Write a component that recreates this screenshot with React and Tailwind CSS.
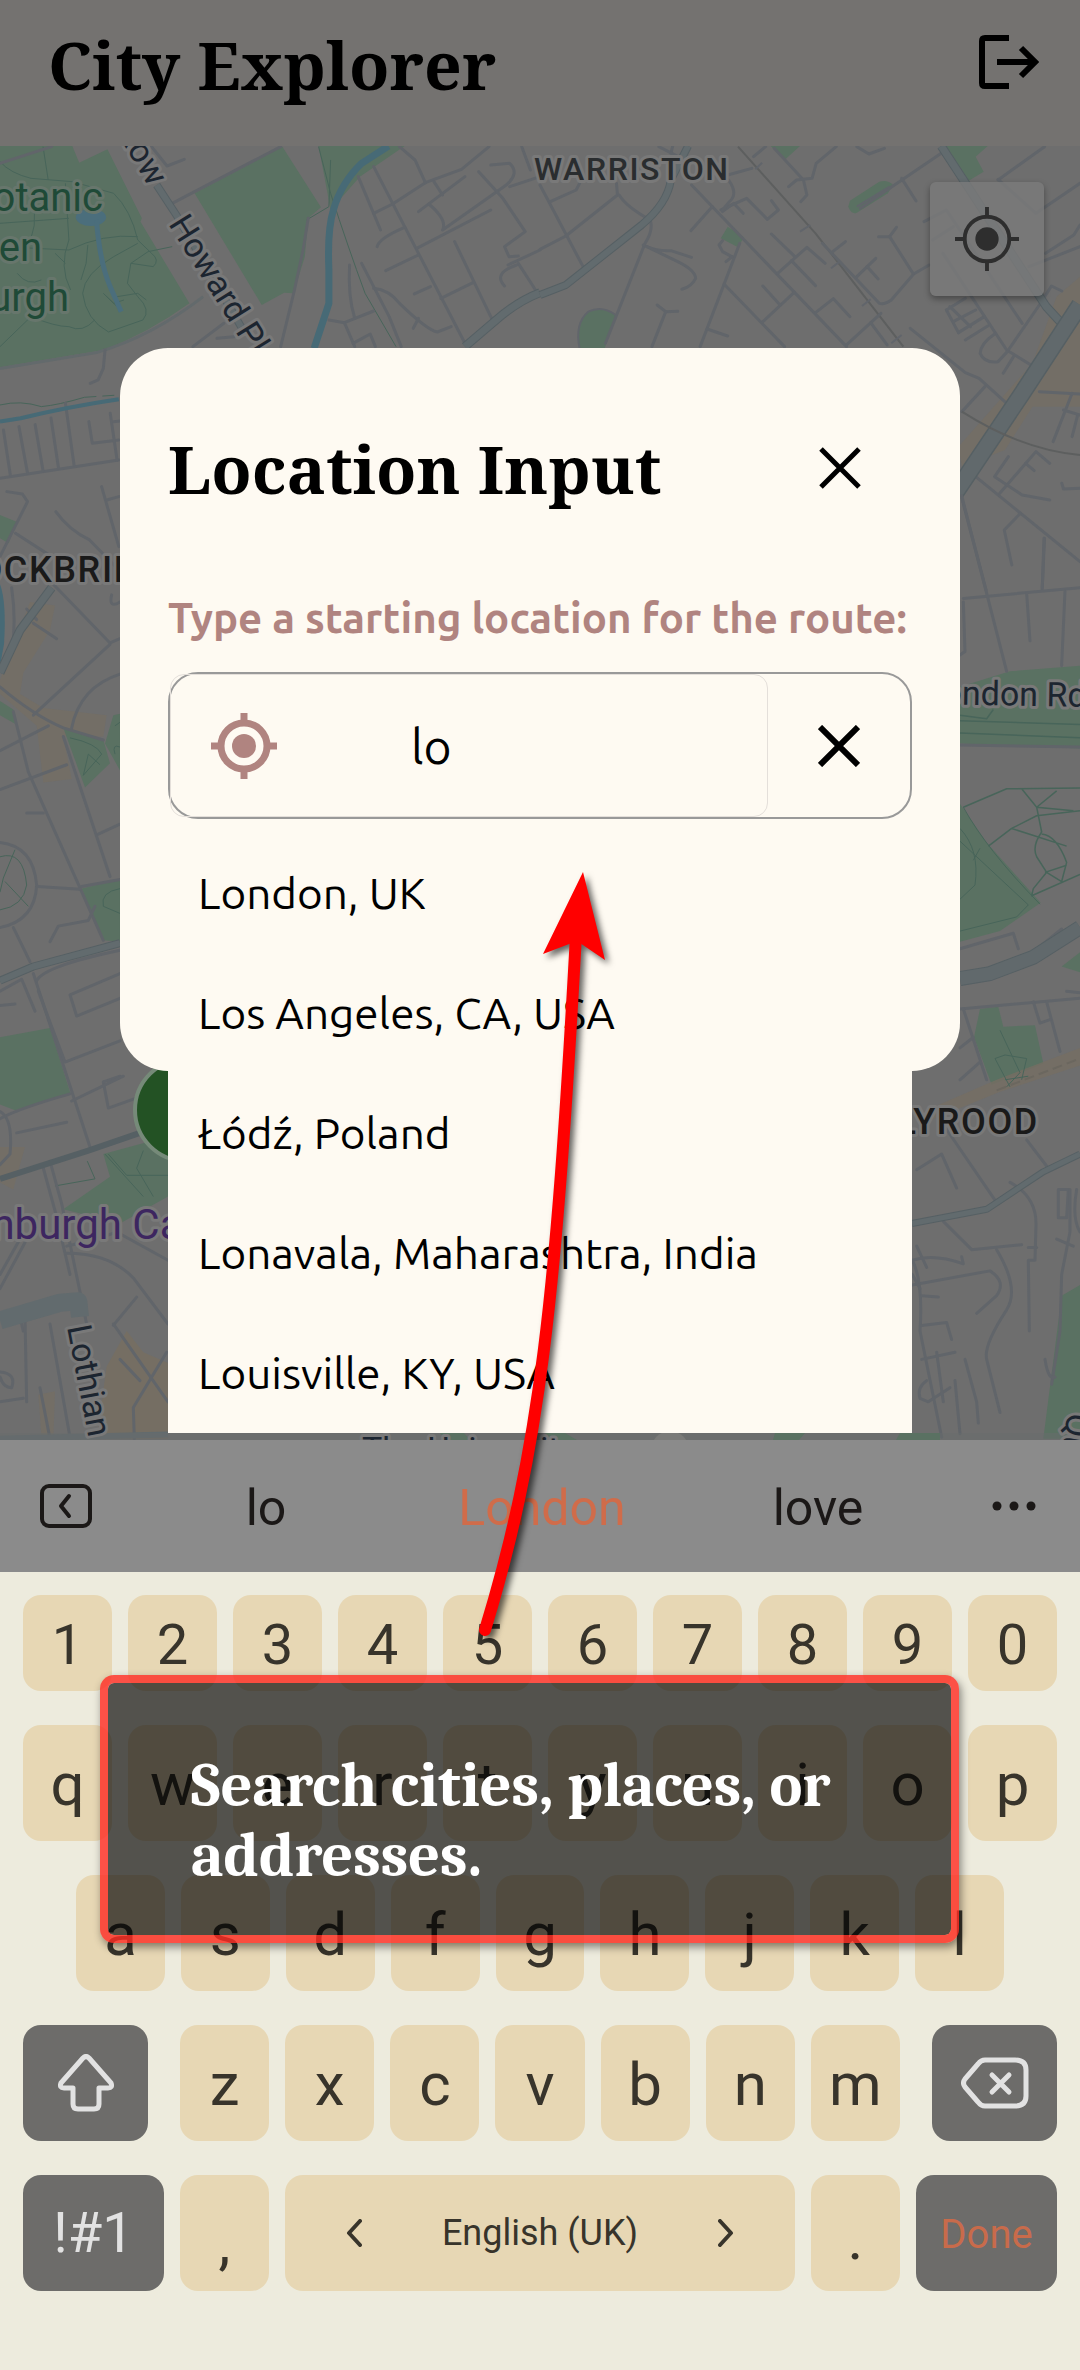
import React from "react";

const NW_ROADS = [
  "M500 220 L815 50", "M0 100 L150 50", "M440 50 L485 108 L535 88", "M895 265 L880 360 L855 480 L815 650", "M560 650 L650 580",
  "M1040 140 L1105 300", "M1085 110 L1350 640", "M1050 400 L1130 560 L1165 650", "M1015 405 Q1010 500 1030 565",
  "M955 570 L1000 578 L1085 543", "M1000 578 L1030 650", "M1025 640 L1075 612 L1090 650", "M1085 475 Q1130 480 1160 520 Q1240 600 1270 606 L1310 590",
  "M1215 565 L1200 595", "M1085 250 L1140 222 L1235 158 L1340 118 L1420 50", "M1160 50 L1205 90 L1235 158", "M1095 350 Q1100 325 1175 292",
  "M1120 422 L1215 375", "M1210 355 L1425 240", "M1203 492 L1250 470", "M1280 505 L1375 457", "M1320 335 L1432 575",
  "M1215 245 L1350 140", "M1245 222 Q1300 270 1285 300 L1470 165 Q1510 130 1480 100 L1425 105", "M1260 155 L1285 195", "M1390 125 L1460 205 L1525 305 L1465 350 L1478 380 L1505 378",
  "M1475 405 L1568 360", "M1505 400 L1555 480", "M1500 405 Q1430 430 1465 468", "M1515 50 L1540 120", "M1480 170 L1568 140",
  "M0 1045 L345 990", "M10 900 L30 1035", "M55 890 L80 1030", "M102 884 L125 1022", "M148 864 L170 1015", "M190 820 L215 1005", "M258 875 L268 940 L345 930", "M320 850 L340 990",
  "M305 660 L300 715 L285 750 L262 760", "M20 1085 L65 1092 L80 1115 L0 1280", "M162 1145 Q200 1200 260 1230 L345 1320", "M295 1070 L345 1250", "M310 1110 L345 1100", "M45 1210 L150 1280", "M330 875 L348 873", "M630 625 L680 620",
];

const NE_ROADS = [
  "M0 165 L125 410", "M30 215 L105 180 L115 160", "M0 358 L75 318 L225 195 L222 160", "M230 195 Q250 230 320 270 Q330 300 305 340 L190 640",
  "M300 345 Q340 365 380 362 L440 382", "M310 350 L400 395 Q450 420 452 445 Q440 470 412 478", "M340 525 L365 545 L400 544", "M365 545 L325 650",
  "M440 165 L890 650", "M500 230 L438 302", "M525 240 L600 205 L660 268 L692 240 L672 212", "M530 245 L562 220 L590 250", "M540 140 Q580 190 550 215 L530 240", "M545 135 L615 115",
  "M580 340 L465 650", "M520 345 L530 365 L557 380 M520 345 L530 332", "M535 463 L710 650", "M485 597 L545 618", "M672 312 L740 380", "M690 430 L775 352 L828 400",
  "M730 392 L800 467", "M645 577 L738 487", "M647 468 L697 525", "M800 548 L852 506 L900 560", "M680 55 L765 150 L775 195 L757 215", "M722 170 L745 150 L790 145 L802 100 L860 50",
  "M820 340 L985 520 Q1000 525 1020 510 L1085 432 L1130 405", "M850 365 L887 335", "M920 440 L975 385", "M950 410 L982 447", "M890 645 L990 550", "M960 578 L1008 645",
  "M983 320 L1015 320 L1035 292", "M1015 320 L1083 430", "M930 235 L1165 70", "M1050 145 L1092 213", "M1330 150 L1465 50", "M1330 148 L1440 250 L1568 160", "M1115 275 L1180 240 L1400 580", "M1140 330 L1200 290",
  "M1420 410 L1568 350", "M1468 370 L1550 315 L1568 285", "M1180 540 L1215 608", "M1190 530 L1250 590 M1180 540 L1235 505 M1200 575 L1265 540 M1215 608 L1290 560 M1235 630 L1300 588",
  "M1170 370 L1355 660 L1430 708", "M1360 660 L1450 525 L1485 468 L1515 483", "M1320 612 Q1280 640 1278 670 Q1290 700 1330 695 L1357 665", "M1375 680 L1345 730",
  "M1075 595 L1235 728 L1275 745 L1355 820", "M1292 770 L1225 845", "M540 395 L558 380", "M385 50 L380 70", "M620 80 L655 50", "M920 50 L955 72 L1000 55",
  "M1265 1040 L1568 1295", "M1395 1150 L1348 1200 L1370 1305", "M1225 1105 L1295 1380", "M1465 1225 L1458 1380", "M1335 1090 L1440 965 L1480 1000", "M1360 980 L1320 1040 L1400 1095 L1480 1110", "M1410 1000 L1435 1022",
  "M1545 790 L1490 935 M1520 840 L1568 855 M1560 860 L1545 920", "M1515 1060 L1520 1077 L1568 1075", "M1450 785 L1568 792", "M345 50 L430 95",
];

const W_ROADS = [
  "M35 350 Q50 400 35 440", "M100 400 L170 422", "M80 380 L110 395", "M160 345 L330 428 L360 422", "M335 360 Q325 380 360 370", "M100 530 L330 430",
  "M0 490 Q100 530 190 548 L310 565", "M215 548 Q240 490 360 472", "M40 525 L85 610 L310 848", "M0 580 L145 545", "M0 635 L200 600", "M190 560 L330 758", "M295 698 L360 684",
  "M245 772 L360 762", "M80 668 L130 668", "M0 710 Q100 715 110 770 Q105 820 0 830", "M112 772 L240 776", "M150 850 L175 828 L265 820 L285 800", "M40 830 L90 878", "M100 895 L270 1140",
  "M110 905 Q130 885 360 862", "M115 920 L195 1020 L360 990", "M210 925 L360 895 M210 925 L230 955 L360 930", "M0 920 L65 903 L105 948", "M0 940 L45 938",
  "M310 1048 L360 1040 M310 1048 L325 1085 L415 1070", "M215 1075 L370 1040", "M0 1090 Q40 1100 30 1150 L0 1165", "M0 1100 Q60 1085 210 1065", "M50 1120 L200 1105",
  "M130 1170 L165 1230 L210 1320", "M150 1160 L185 1220 L260 1390", "M200 1290 Q330 1290 400 1325 L504 1390", "M200 1280 Q300 1270 350 1260 L504 1300", "M410 1352 L340 1392", "M340 1390 L504 1500",
  "M500 1430 L400 1508 L403 1552", "M0 1320 L60 1270", "M0 1340 L75 1275", "M0 1458 Q50 1460 35 1480 Q10 1480 0 1465", "M150 1390 L210 1550", "M120 1480 L150 1552", "M70 1400 L60 1380", "M360 1440 L420 1470", "M0 1500 L70 1495", "M75 1380 L80 1500",
];

const E_ROADS = [
  "M190 365 L540 350", "M185 220 L320 468", "M380 358 L390 425", "M495 355 L485 460", "M432 280 L427 350", "M190 370 L195 440 L180 445", "M180 572 L540 575",
  "M180 860 L340 838 L355 860", "M390 868 L485 832", "M500 920 L540 922", "M180 945 L540 930", "M190 945 L260 1045", "M180 1000 L220 985", "M180 1045 L240 1020", "M440 935 L480 1005", "M400 935 L420 965 L450 960",
  "M50 1172 L125 1150 L170 1198", "M125 1105 L285 1215", "M380 1130 L445 1170", "M50 1280 L80 1310", "M130 1245 L215 1285 L365 1278", "M37 1300 Q100 1290 190 1305 L185 1295", "M37 1335 L270 1315 Q320 1330 290 1350 L230 1375",
  "M37 1300 Q70 1330 60 1400 L125 1550", "M65 1350 L115 1352", "M65 1392 L140 1388 L155 1412", "M37 1320 L60 1340", "M65 1440 L165 1430", "M80 1470 Q50 1480 60 1495 L85 1500 L150 1480", "M110 1430 L130 1500",
  "M290 1285 Q360 1340 320 1370 Q250 1420 260 1440 L300 1515", "M330 1190 Q410 1210 408 1250 L405 1300 L385 1300 L388 1400", "M385 1282 L410 1282", "M475 1200 L505 1200 L500 1240 L475 1240 Z", "M510 1200 L510 1260 L485 1320 L480 1400 L455 1475", "M530 1200 Q515 1240 540 1260", "M435 1440 Q445 1470 465 1465", "M195 1440 L230 1500 L235 1530", "M165 1470 L180 1545", "M470 1270 L520 1280",
];

function Roads({ paths, width = 3 }) {
  return (
    <g fill="none" stroke="#61656a" strokeWidth={width} strokeLinejoin="round" strokeLinecap="round">
      {paths.map((d) => (
        <path key={d} d={d} vectorEffect="non-scaling-stroke" />
      ))}
    </g>
  );
}

function Line({ d, color, width, dash }) {
  return <path d={d} fill="none" stroke={color} strokeWidth={width} strokeDasharray={dash} strokeLinejoin="round" vectorEffect="non-scaling-stroke" />;
}

const GREEN = "#5a7162";
const SAND = "#756e63";
const PATH = "#48655a";
const WATER = "#476a76";
const EDGE = "#566064";
const MAJOR = "#626b6e";

function CityMap() {
  return (
    <svg viewBox="0 146 1080 1294" preserveAspectRatio="xMidYMin slice" className="absolute inset-0 h-full w-full font-['Roboto',sans-serif]" aria-hidden="true">
      <rect x="0" y="146" width="1080" height="1294" fill="#6e6e6e" />

      {/* north-west quarter */}
      <g transform="translate(0 130) scale(0.3444 0.3333)">
        <path d="M0 48 L210 48 L230 98 L312 58 L412 265 L408 275 L550 520 Q430 610 300 660 L0 712 Z" fill={GREEN} />
        <path d="M565 190 L820 50 L932 232 L895 265 L885 380 L852 490 L825 488 L760 525 Z" fill={GREEN} />
        <path d="M925 48 L1175 48 L1045 140 L960 240 Z" fill={GREEN} />
        <path d="M0 1155 L48 1175 L25 1240 L0 1225 Z" fill={GREEN} />
        <Line d="M0 716 L280 668 Q440 620 590 500" color="#636a6c" width="3" />
        <g>
          <Line d="M0 95 Q30 130 90 145 L210 155 L330 190 Q380 240 400 330 L440 370 Q465 390 445 410 L380 400 L370 460 L400 500 Q440 540 415 570 L315 606 Q250 570 240 490 Q245 430 330 380 L400 340" color={PATH} width="1" />
          <Line d="M125 50 L140 150 M190 160 L200 330 Q170 410 205 480 M0 280 L200 265 M100 250 Q105 330 60 350 M0 350 L200 360 Q300 310 400 320 M0 650 L90 560 Q160 590 200 590 Q240 610 275 570 M160 370 L190 400 M255 345 L250 400 L235 450 M380 400 L430 365 L500 350 M50 430 Q80 470 120 450" color={PATH} width="1" />
          <Line d="M300 490 L330 520 L360 510 M310 500 L350 540 M340 500 L400 490 L425 510" color={PATH} width="1" />
          <Line d="M925 50 L960 190 Q1010 350 1060 490 L1150 650" color={PATH} width="1" />
          <Line d="M890 270 L955 230 L960 90" color={PATH} width="1" />
          <Line d="M0 825 Q60 810 120 830 Q170 825 245 802" color={PATH} width="1" />
          <Line d="M245 802 L345 795" color={PATH} width="1" dash="12 6" />
        </g>
        <Roads paths={NW_ROADS} />
        <Line d="M455 165 L515 260 L700 590" color={EDGE} width="8" />
        <Line d="M455 165 L515 260 L700 590" color={MAJOR} width="6" />
        <Line d="M1350 650 L1435 575 Q1500 515 1568 488" color={EDGE} width="9" />
        <Line d="M1350 650 L1435 575 Q1500 515 1568 488" color={MAJOR} width="7" />
        <Line d="M1128 48 L1050 100 Q990 160 968 240 Q950 300 955 420 L955 520 L912 655" color={WATER} width="7" />
        <Line d="M0 875 L60 865 Q200 830 345 808" color={WATER} width="4" />
        <ellipse cx="264" cy="262" rx="44" ry="26" fill="#4b6e7c" />
        <Line d="M280 270 Q290 400 320 470 L352 545" color="#4b6e7c" width="5" />
      </g>

      {/* north-east quarter */}
      <g transform="translate(540 130) scale(0.3444 0.3333)">
        <path d="M1500 500 L1568 440 L1568 830 L1430 830 L1350 960 L1225 1010 L1215 950 L1430 700 Z" fill={SAND} opacity="0.7" />
        <path d="M670 48 L755 48 L710 90 Z M1175 48 L1300 48 L1265 80 L1288 125 L1240 155 Z" fill={GREEN} />
        <path d="M545 290 L592 322 L575 352 L525 325 Z" fill={GREEN} />
        <path d="M895 230 L900 212 L985 155 Q1010 148 1025 165 L1010 190 L920 248 Q905 255 895 230 Z" fill={GREEN} />
        <path d="M115 655 Q100 580 140 545 Q180 525 220 555 L188 655 Z" fill={GREEN} />
        <Line d="M115 655 Q100 580 140 545 Q180 525 220 555" color="#61656b" width="2" />
        <Line d="M920 230 L1015 170" color="#61656b" width="2" />
        <Line d="M575 50 L800 310 L1055 650" color="#5d5f5f" width="2" />
        <Line d="M625 118 L645 98 M755 305 L785 285 M845 415 L870 395 M935 528 L960 508 M1020 640 L1050 615" color="#61656b" width="2" />
        <Roads paths={NE_ROADS} />
        <Line d="M0 495 L75 465 L295 285 Q370 220 380 150 L430 48" color={EDGE} width="8" />
        <Line d="M0 495 L75 465 L295 285 Q370 220 380 150 L430 48" color={MAJOR} width="6" />
        <Line d="M1165 48 L1470 530 L1510 575" color={EDGE} width="9" />
        <Line d="M1165 48 L1470 530 L1510 575" color={MAJOR} width="7" />
        <Line d="M1568 525 L1400 790 L1205 1090" color={EDGE} width="18" />
        <Line d="M1568 525 L1400 790 L1205 1090" color="#61696c" width="15" />
        <Line d="M1225 845 Q1400 960 1568 975" color="#5d5f5f" width="2" />
      </g>

      {/* western edge */}
      <g transform="translate(0 340) scale(0.3333 0.7079)">
        <path d="M0 480 L90 370 L165 375 L150 410 L70 470 L60 500 L130 520 L320 530 L310 560 L190 560 L215 620 L130 625 L110 545 L0 500 Z" fill={SAND} opacity="0.7" />
        <path d="M290 1552 L320 1450 L380 1400 L430 1430 L504 1445 L504 1552 Z" fill={SAND} />
        <path d="M0 1140 L75 1140 L60 1165 L40 1200 L0 1190 Z M115 1490 L165 1485 L160 1552 L125 1552 Z" fill={SAND} opacity="0.7" />
        <path d="M0 345 Q20 370 12 430 L0 460 Z" fill={WATER} />
        <path d="M190 548 L310 565 L330 598 L255 632 Z M315 570 L340 530 L360 528 L360 608 Z M245 775 L360 762 L360 850 L310 848 Z M0 985 L150 972 L212 1065 L45 1088 L0 1080 Z M310 1150 L504 1125 L504 1210 L360 1248 L190 1228 L330 1182 Z M0 510 L40 522 L45 542 L0 530 Z" fill={GREEN} />
        <Line d="M210 562 Q290 570 305 585 L250 615 L265 585 L300 600 M345 545 L360 540 M345 585 Q335 570 360 575 M310 800 Q300 780 360 775 M310 800 L360 810 M315 1150 L430 1210 M325 1150 L380 1180 L504 1180 M430 1145 L410 1170 L460 1210 M165 1195 L285 1185 L262 1160 M0 730 Q70 720 80 770 Q70 800 0 805 M45 720 L10 760 L0 780 M15 765 L85 800" color={PATH} width="1" />
        <Roads paths={W_ROADS} />
        <Line d="M0 470 L60 410 L155 350" color={EDGE} width="9" />
        <Line d="M0 470 L60 410 L155 350" color={MAJOR} width="7" />
        <Line d="M0 905 L100 885 L360 852" color={EDGE} width="8" />
        <Line d="M0 905 L100 885 L360 852" color={MAJOR} width="6" />
        <Line d="M0 1185 L265 1145 L420 1120" color={EDGE} width="6" />
        <Line d="M0 1385 L180 1360 L235 1358 L240 1380" color={MAJOR} width="18" />
        <Line d="M0 1552 L504 1546" color={MAJOR} width="6" />
      </g>

      {/* eastern edge */}
      <g transform="translate(900 340) scale(0.3333 0.7079)">
        <path d="M180 490 L330 468 L540 460 L540 577 L180 570 Z M180 655 L260 710 L422 795 L300 835 L180 850 Z M485 885 L540 865 L540 893 Z M240 945 L295 942 L310 970 L405 968 L430 1022 L275 1052 L222 985 Z M485 1350 L540 1335 L540 1552 L430 1552 Z" fill={GREEN} />
        <path d="M70 1090 L290 1045 L540 1000 L540 1025 L300 1062 L75 1105 Z" fill={SAND} opacity="0.8" />
        <Line d="M180 538 L540 543 M180 555 L540 562 M180 530 L260 535 L280 522 M190 660 L320 634 L540 633 M265 715 L335 690 L410 672 L540 665 M335 690 L500 715 M365 634 L410 660 L520 665 M410 660 L425 695 Q395 715 410 730 L440 752 M410 660 L470 637 M425 698 Q470 700 500 738 L485 765 L440 752 L400 775 L395 785 L540 755 M435 752 L500 742" color={PATH} width="1.5" />
        <Line d="M190 660 Q260 720 420 797 M180 690 Q240 720 225 770 L180 790 M180 708 L385 798 L350 815 L180 835 M220 735 L240 718 M285 1015 L315 1010 L380 1015 L365 1045 M300 975 L360 1035 L320 1055 M285 1015 L330 1055 M315 1045 L385 1040" color={PATH} width="1" />
        <Roads paths={E_ROADS} />
        <Line d="M180 902 L270 895 L400 872 L540 830" color={EDGE} width="15" />
        <Line d="M180 902 L270 895 L400 872 L540 830" color="#61696c" width="13" />
        <Line d="M36 1248 L260 1228 L430 1175 L540 1150" color={EDGE} width="7" />
        <Line d="M36 1248 L260 1228 L430 1175 L540 1150" color={MAJOR} width="5" />
        <Line d="M290 1060 L540 1015" color="#6b675f" width="2" dash="10 5" />
      </g>

      <path d="M0 1433 H1080 V1440 H0 Z" fill="#686b6c" opacity="0.5" />
      <path d="M440 1433 h24 l6 7 h-24 Z M545 1433 h20 l12 7 h-26 Z M775 1433 h30 l-6 7 h-26 Z M900 1433 h40 v7 h-44 Z" fill={GREEN} />
      <circle cx="670" cy="1450" r="19" fill="#7a7a78" />

      <circle cx="186" cy="1110" r="51" fill="#235224" stroke="#768a79" strokeWidth="4" />

      <g stroke="#797979" strokeWidth="6" strokeLinejoin="round" paintOrder="stroke">
        <g fill="#1f4a37" stroke="#67766c" fontSize="40" textAnchor="end">
          <text x="103" y="211">Botanic</text>
          <text x="42" y="261">Garden</text>
          <text x="69" y="311">Edinburgh</text>
        </g>
        <g fill="#1c2530" fontSize="34">
          <text transform="translate(149 188) rotate(60)" textAnchor="end">Row</text>
          <text transform="translate(168 224) rotate(58)">Howard Pl</text>
          <text transform="translate(924 704) rotate(1)">London Rd</text>
          <text transform="translate(67 1327) rotate(79)">Lothian Rd</text>
          <text transform="translate(1068 1412) rotate(100)">Queens Dr</text>
          <text x="362" y="1461">The University</text>
        </g>
        <g fill="#2a2d2f" fontWeight="500" className="tracking-widest">
          <text x="534" y="180" fontSize="32">WARRISTON</text>
          <g fontSize="36" fill="#1a1a1a">
            <text x="-69" y="582">STOCKBRIDGE</text>
            <text x="843" y="1134">HOLYROOD</text>
          </g>
        </g>
        <text x="-66" y="1239" fontSize="42" fill="#3d2660">Edinburgh Castle</text>
      </g>
    </svg>
  );
}

function Crosshair({ className, ring }) {
  return (
    <svg viewBox="0 0 66 66" className={className} fill="none" stroke="currentColor" strokeWidth={ring} aria-hidden="true">
      <circle cx="33" cy="33" r="23" />
      <circle cx="33" cy="33" r="12" fill="currentColor" stroke="none" />
      <path d="M33 0 V10 M33 56 V66 M0 33 H10 M56 33 H66" />
    </svg>
  );
}

function Cross({ stroke }) {
  return (
    <svg viewBox="0 0 42 42" className="size-[42px]" fill="none" stroke="currentColor" strokeWidth={stroke} aria-hidden="true">
      <path d="M2 2 L40 40 M40 2 L2 40" />
    </svg>
  );
}

const PLACES = ["London, UK", "Los Angeles, CA, USA", "Łódź, Poland", "Lonavala, Maharashtra, India", "Louisville, KY, USA"];

function LocationDialog() {
  return (
    <div role="dialog" aria-labelledby="dialog-title" className="relative h-[723px] rounded-[48px] bg-[#fefaf2] px-12 pt-[72px] text-black">
      <div className="flex h-24 items-center justify-between pr-[51px]">
        <h2 id="dialog-title" className="font-['Noto_Serif','DejaVu_Serif',serif] text-[66px] font-bold whitespace-nowrap">
          Location Input
        </h2>
        <button type="button" aria-label="Close">
          <Cross stroke="5" />
        </button>
      </div>
      <label htmlFor="place" className="mt-[72px] block h-[60px] font-['Ubuntu','Noto_Sans',sans-serif] text-[42px] leading-[60px] font-bold whitespace-nowrap text-[#b08480]">
        Type a starting location for the route:
      </label>
      <div className="mt-6 flex h-[147px] items-center rounded-[30px] border-2 border-[#999999]">
        <div className="flex h-full flex-1 items-center rounded-[14px] border border-[#e4dfda] pl-10">
          <button type="button" aria-label="Use my location" className="text-[#b08480]">
            <Crosshair className="size-[66px]" ring="7" />
          </button>
          <input id="place" defaultValue="lo" className="ml-[134px] w-full min-w-0 bg-transparent font-['Ubuntu','Noto_Sans',sans-serif] text-[48px] outline-none" />
        </div>
        <button type="button" aria-label="Clear" className="flex w-[142px] justify-center">
          <Cross stroke="6" />
        </button>
      </div>
      <ul className="absolute inset-x-12 top-[485px] bg-[#fefaf2]">
        {PLACES.map((place) => (
          <li key={place}>
            <button type="button" className="h-[120px] w-full px-[30px] text-left font-['Ubuntu','Noto_Sans',sans-serif] text-[44px] whitespace-nowrap">
              {place}
            </button>
          </li>
        ))}
      </ul>
    </div>
  );
}

function Key({ children, className = "h-[116px] flex-1 pt-1 text-[60px]", label }) {
  return (
    <button type="button" aria-label={label} className={`flex min-w-0 items-center justify-center rounded-[18px] bg-[#e7d7b4] text-[#38342b] ${className}`}>
      {children}
    </button>
  );
}

function SuggestionBar() {
  return (
    <div className="flex h-[132px] items-center bg-[#8b8b8b] px-10 text-[50px] text-[#1b1817]">
      <button type="button" aria-label="Back">
        <svg viewBox="0 0 52 44" className="h-11 w-[52px]" fill="none" stroke="currentColor" strokeWidth="4" strokeLinecap="round" strokeLinejoin="round">
          <rect x="2" y="2" width="48" height="40" rx="7" />
          <path d="M29 12 L21 22 L29 32" />
        </svg>
      </button>
      <div className="flex flex-1 px-9 pt-1">
        <button type="button" className="flex-1">lo</button>
        <button type="button" className="flex-1 text-[#d06c4a]">London</button>
        <button type="button" className="flex-1">love</button>
      </div>
      <button type="button" aria-label="More" className="mr-1">
        <svg viewBox="0 0 44 10" className="h-[10px] w-11" fill="currentColor">
          <circle cx="5" cy="5" r="4.5" />
          <circle cx="22" cy="5" r="4.5" />
          <circle cx="39" cy="5" r="4.5" />
        </svg>
      </button>
    </div>
  );
}

function Keyboard() {
  return (
    <div className="flex flex-col gap-[34px] bg-[#edebdd] px-[23px] pt-[23px] pb-[79px]">
      <div className="flex gap-4">
        {[..."1234567890"].map((k) => (
          <Key key={k} className="h-24 flex-1 pt-1 text-[56px]">{k}</Key>
        ))}
      </div>
      <div className="flex gap-4">
        {[..."qwertyuiop"].map((k) => (
          <Key key={k}>{k}</Key>
        ))}
      </div>
      <div className="flex gap-4 px-[53px]">
        {[..."asdfghjkl"].map((k) => (
          <Key key={k}>{k}</Key>
        ))}
      </div>
      <div className="flex gap-8">
        <button type="button" aria-label="Shift" className="flex h-[116px] w-[125px] items-center justify-center rounded-[18px] bg-[#6d6c6a] text-[#e2e2e2]">
          <svg viewBox="0 0 56 58" className="h-[58px] w-14" fill="none" stroke="currentColor" strokeWidth="5" strokeLinejoin="round">
            <path d="M25 4 Q28 1 31 4 L53 29 Q55 34 50 34 H41 V50 Q41 55 36 55 H20 Q15 55 15 50 V34 H6 Q1 34 3 29 Z" />
          </svg>
        </button>
        <div className="flex flex-1 gap-4">
          {[..."zxcvbnm"].map((k) => (
            <Key key={k}>{k}</Key>
          ))}
        </div>
        <button type="button" aria-label="Backspace" className="flex h-[116px] w-[125px] items-center justify-center rounded-[18px] bg-[#6d6c6a] text-[#e2e2e2]">
          <svg viewBox="0 0 68 52" className="h-[52px] w-[68px]" fill="none" stroke="currentColor" strokeWidth="5" strokeLinejoin="round" strokeLinecap="round">
            <path d="M24 3 H54 Q65 3 65 13 V39 Q65 49 54 49 H24 Q20 49 17 45 L4 30 Q1 26 4 22 L17 7 Q20 3 24 3 Z" />
            <path d="M31 18 L48 35 M48 18 L31 35" />
          </svg>
        </button>
      </div>
      <div className="flex gap-4">
        <button type="button" className="h-[116px] w-[141px] rounded-[18px] bg-[#6d6c6a] text-[56px] text-[#e2e2e2]">!#1</button>
        <Key className="h-[116px] w-[89px] pt-5 text-[60px]">,</Key>
        <Key className="h-[116px] flex-1 gap-20 text-[36px]">
          <svg viewBox="0 0 16 28" className="h-7 w-4" fill="none" stroke="currentColor" strokeWidth="4" strokeLinecap="round" strokeLinejoin="round">
            <path d="M14 2 L3 14 L14 26" />
          </svg>
          English (UK)
          <svg viewBox="0 0 16 28" className="h-7 w-4" fill="none" stroke="currentColor" strokeWidth="4" strokeLinecap="round" strokeLinejoin="round">
            <path d="M2 2 L13 14 L2 26" />
          </svg>
        </Key>
        <Key className="h-[116px] w-[89px] pt-3 text-[60px]">.</Key>
        <button type="button" className="h-[116px] w-[141px] rounded-[18px] bg-[#6d6c6a] pt-1 text-[40px] text-[#c86b4b]">Done</button>
      </div>
    </div>
  );
}

function Tip() {
  return (
    <>
      <p className="absolute top-[235px] right-[121px] left-[100px] h-[268px] rounded-[14px] border-8 border-[#ff2a22]/80 bg-black/65 bg-clip-padding pt-[68px] pl-[83px] font-['Cambria','Caladea','Noto_Serif',serif] text-[62px] leading-[70px] font-bold text-white shadow-[2px_4px_8px_rgba(0,0,0,0.45)]">
        Search cities, places, or
        <br />
        addresses.
      </p>
      <svg viewBox="470 860 160 790" className="absolute top-[-580px] left-[470px] h-[790px] w-40 drop-shadow-[4px_4px_3px_rgba(0,0,0,0.6)]" aria-hidden="true">
        <path d="M485 1630 C540 1450 556 1300 576 935" fill="none" stroke="#ff0000" strokeWidth="12" strokeLinecap="round" />
        <path d="M583 872 L605 960 L577 941 L543 954 Z" fill="#ff0000" />
      </svg>
    </>
  );
}

export default function App() {
  return (
    <div className="flex min-h-screen flex-col">
      <header className="flex h-[146px] items-start justify-between bg-[#747270] pt-4 pr-[41px] pl-12 text-black">
        <h1 className="font-['Noto_Serif','DejaVu_Serif',serif] text-[66px] leading-[96px] font-bold whitespace-nowrap">City Explorer</h1>
        <button type="button" aria-label="Log out" className="mt-[19px]">
          <svg viewBox="0 0 60 54" className="h-[54px] w-[60px]" fill="none" stroke="currentColor" strokeWidth="6">
            <path d="M30 3 H6 Q3 3 3 6 V48 Q3 51 6 51 H30" />
            <path d="M18 27 H56 M42 13 L56 27 L42 41" />
          </svg>
        </button>
      </header>
      <main className="relative flex-1 px-[120px] pt-[202px]">
        <CityMap />
        <button type="button" aria-label="My location" className="absolute top-9 right-9 flex size-[114px] items-center justify-center rounded-md bg-[#7a7a7a]/80 text-[#2e2e2e] shadow-[0_3px_6px_rgba(0,0,0,0.35)]">
          <Crosshair className="size-16" ring="4" />
        </button>
        <LocationDialog />
      </main>
      <footer className="relative font-['Roboto',sans-serif]">
        <SuggestionBar />
        <Keyboard />
        <Tip />
      </footer>
    </div>
  );
}
